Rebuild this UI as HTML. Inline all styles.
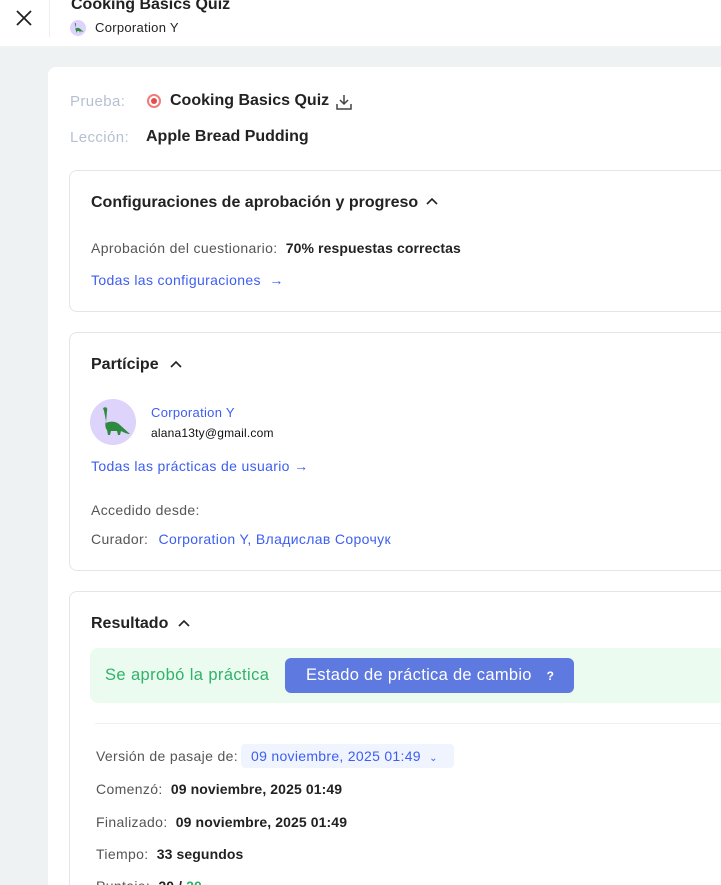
<!DOCTYPE html>
<html style="width:721px;height:885px;overflow:hidden"><head><meta charset="utf-8"><style>
*{box-sizing:border-box;margin:0;padding:0}
body{width:721px;height:885px;overflow:hidden;background:#eff2f3;font-family:"Liberation Sans",sans-serif;color:#222;position:relative;font-size:14px}
.a{position:absolute;white-space:nowrap}
.hdr{position:absolute;left:0;top:0;width:721px;height:46px;background:#fff}
.card{position:absolute;left:48px;top:67px;width:700px;height:830px;background:#fff;border-radius:8px}
.box{position:absolute;left:69px;width:680px;border:1px solid #e3e5ea;border-radius:8px;background:#fff}
.blue{color:#3d5ef0}
.g{color:#555;letter-spacing:0.35px}
b{font-weight:bold;color:#222;letter-spacing:0.1px}
.h{font-size:16px;font-weight:bold;color:#222}
</style></head><body>
<div class="hdr"></div>
<svg class="a" style="left:14px;top:8px" width="20" height="20" viewBox="0 0 20 20"><path d="M3 3L17 17M17 3L3 17" stroke="#222" stroke-width="1.8"/></svg>
<div class="a" style="left:49px;top:0;width:1px;height:37px;background:#eee"></div>
<div class="a" style="left:71px;top:-4px;font-size:16px;font-weight:bold">Cooking Basics Quiz</div>
<div class="a" style="left:70px;top:20px;width:16px;height:16px;border-radius:50%;background:#ddd3fb"></div>
<svg class="a" style="left:72px;top:22px" width="12" height="12" viewBox="0 0 36 36"><path d="M8 4c3-2 5 0 4 3l-1 12c4-2 10-2 14 2l10 9c-3 0-7-2-9-3l-1 4h-2l-1-4h-6l-1 4h-2l-1-5c-2-2-2-6-1-9L9 7z" fill="#2e8a3e"/></svg>
<div class="a" style="left:95px;top:20px;font-size:13px;letter-spacing:0.3px">Corporation Y</div>
<div class="card"></div>
<div class="a" style="left:70px;top:93px;font-size:15px;color:#b7bfd3;letter-spacing:0.4px">Prueba:</div>
<div class="a" style="left:147px;top:94px;width:14px;height:14px;border-radius:50%;border:2px solid #f07b7b;background:#fff"><div style="margin:2px;width:6px;height:6px;border-radius:50%;background:#e84a4a"></div></div>
<div class="a" style="left:170px;top:92px;font-size:16px;font-weight:bold;color:#222">Cooking Basics Quiz</div>
<svg class="a" style="left:335px;top:93px" width="18" height="18" viewBox="0 0 18 18"><path d="M9 2v9M5 7l4 4 4-4M2 11v5h14v-5" stroke="#444" stroke-width="1.5" fill="none"/></svg>
<div class="a" style="left:70px;top:129px;font-size:15px;color:#b7bfd3;letter-spacing:0.4px">Lección:</div>
<div class="a" style="left:146px;top:128px;font-size:16px;font-weight:bold;color:#222">Apple Bread Pudding</div>

<div class="box" style="top:170px;height:142px"></div>
<div class="a h" style="left:91px;top:194px">Configuraciones de aprobación y progreso</div>
<svg class="a" style="left:426px;top:197px" width="12" height="10"><path d="M1 7l5-5 5 5" stroke="#222" stroke-width="1.6" fill="none"/></svg>
<div class="a g" style="left:91px;top:240px">Aprobación del cuestionario: <b style="margin-left:4px">70% respuestas correctas</b></div>
<div class="a blue g" style="left:91px;top:272px;color:#3d5ef0">Todas las configuraciones &nbsp;→</div>

<div class="box" style="top:332px;height:239px"></div>
<div class="a h" style="left:91px;top:356px">Partícipe</div>
<svg class="a" style="left:170px;top:360px" width="12" height="10"><path d="M1 7l5-5 5 5" stroke="#222" stroke-width="1.6" fill="none"/></svg>
<div class="a" style="left:90px;top:399px;width:46px;height:46px;border-radius:50%;background:#ddd3fb"></div>
<svg class="a" style="left:95px;top:404px" width="36" height="36" viewBox="0 0 36 36"><path d="M8 4c3-2 5 0 4 3l-1 12c4-2 10-2 14 2l10 9c-3 0-7-2-9-3l-1 4h-2l-1-4h-6l-1 4h-2l-1-5c-2-2-2-6-1-9L9 7z" fill="#2e8a3e"/></svg>
<div class="a blue" style="left:151px;top:405px;font-size:13px;letter-spacing:0.3px">Corporation Y</div>
<div class="a" style="left:151px;top:426px;font-size:12px;color:#111;letter-spacing:0.2px">alana13ty@gmail.com</div>
<div class="a g" style="left:91px;top:458px;color:#3d5ef0">Todas las prácticas de usuario →</div>
<div class="a g" style="left:91px;top:502px">Accedido desde:</div>
<div class="a g" style="left:91px;top:531px">Curador: <span class="blue" style="margin-left:6px">Corporation Y, Владислав Сорочук</span></div>

<div class="box" style="top:591px;height:320px"></div>
<div class="a h" style="left:91px;top:615px">Resultado</div>
<svg class="a" style="left:178px;top:619px" width="12" height="10"><path d="M1 7l5-5 5 5" stroke="#222" stroke-width="1.6" fill="none"/></svg>
<div class="a" style="left:90px;top:648px;width:640px;height:55px;background:#ebfbef;border-radius:8px"></div>
<div class="a" style="left:105px;top:666px;font-size:16.5px;color:#2fb36a;letter-spacing:0.4px">Se aprobó la práctica</div>
<div class="a" style="left:285px;top:658px;width:289px;height:35px;background:#5e79e0;border-radius:6px;color:#fff;font-size:16.5px;line-height:35px;padding-left:21px;letter-spacing:0.3px">Estado de práctica de cambio <span style="font-size:12px;margin-left:10px;font-weight:bold">?</span></div>
<div class="a" style="left:95px;top:723px;width:640px;height:1px;background:#eef0f2"></div>
<div class="a g" style="left:96px;top:748px">Versión de pasaje de:</div>
<div class="a blue" style="left:241px;top:744px;width:213px;height:24px;background:#f0f4ff;border-radius:4px;padding:4px 0 0 10px;letter-spacing:0.3px">09 noviembre, 2025 01:49 <span style="font-size:10px;margin-left:4px">⌄</span></div>
<div class="a g" style="left:96px;top:781px">Comenzó: <b style="margin-left:4px">09 noviembre, 2025 01:49</b></div>
<div class="a g" style="left:96px;top:814px">Finalizado: <b style="margin-left:4px">09 noviembre, 2025 01:49</b></div>
<div class="a g" style="left:96px;top:846px">Tiempo: <b style="margin-left:4px">33 segundos</b></div>
<div class="a g" style="left:96px;top:878px">Puntaje: <b style="margin-left:4px">20 / <span style="color:#2fb36a">20</span></b></div>
</body></html>
